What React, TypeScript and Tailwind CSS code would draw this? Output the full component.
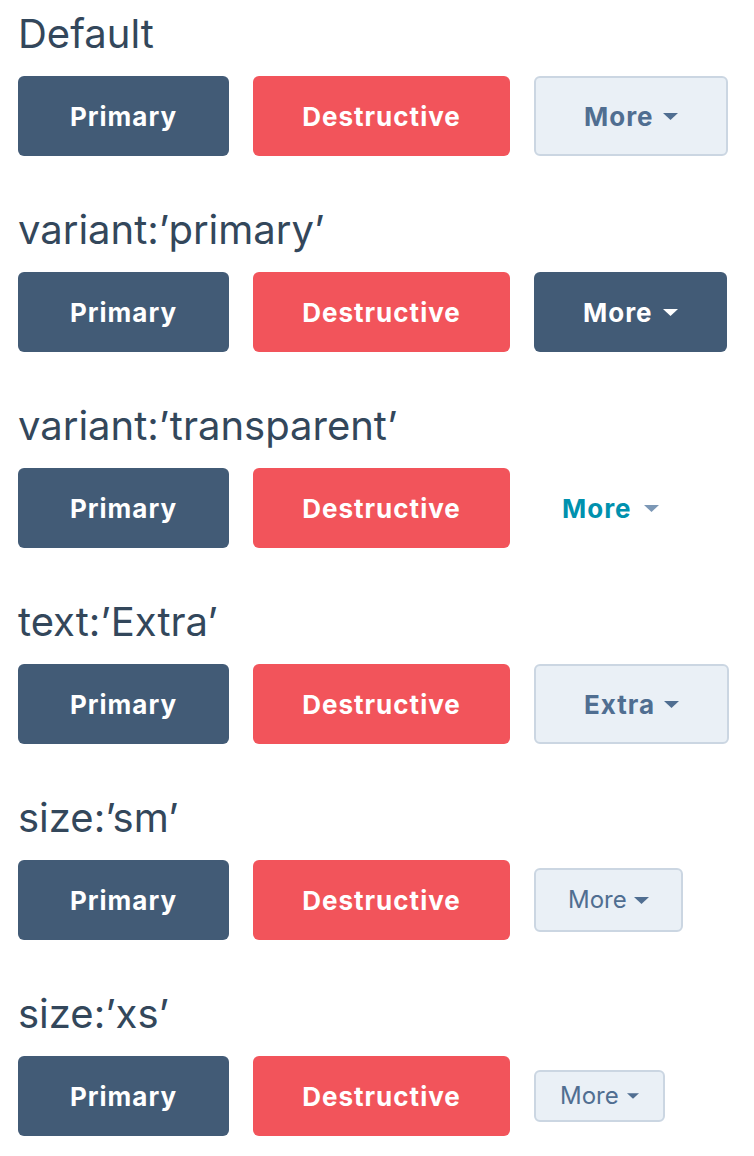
import React from "react";

type Variant = "secondary" | "primary" | "transparent";
type Size = "md" | "sm" | "xs";

const font = { fontFamily: "Inter, 'Noto Sans', sans-serif" };

function Caret({ className }: { className: string }) {
  return (
    <svg viewBox="0 0 15 7" className={className} fill="currentColor">
      <path d="M0 0 H15 L7.5 7 Z" />
    </svg>
  );
}

function MoreButton({ variant, size, label }: { variant: Variant; size: Size; label: string }) {
  if (variant === "transparent") {
    return (
      <button className="flex items-center gap-[12px] pl-[28px] h-[80px] text-[26px] font-bold tracking-[1px] text-[#0091ae]">
        {label}
        <Caret className="w-[15px] h-[7px] text-[#7c98b6]" />
      </button>
    );
  }
  if (variant === "primary") {
    return (
      <button className="flex items-center gap-[10px] px-[49px] h-[80px] rounded-[6px] bg-[#425b76] text-[26px] font-bold tracking-[1px] text-white">
        {label}
        <Caret className="w-[15px] h-[7px]" />
      </button>
    );
  }
  if (size === "sm") {
    return (
      <button className="flex items-center gap-[7px] px-[32px] h-[64px] rounded-[6px] border-2 border-[#cbd6e2] bg-[#eaf0f6] text-[24px] font-normal text-[#506e91]">
        {label}
        <Caret className="w-[15px] h-[7px]" />
      </button>
    );
  }
  if (size === "xs") {
    return (
      <button className="flex items-center gap-[8px] px-[24px] h-[52px] rounded-[6px] border-2 border-[#cbd6e2] bg-[#eaf0f6] text-[24px] font-normal text-[#506e91]">
        {label}
        <Caret className="w-[12px] h-[6px]" />
      </button>
    );
  }
  return (
    <button className="flex items-center gap-[9px] px-[48px] h-[80px] rounded-[6px] border-2 border-[#cbd6e2] bg-[#eaf0f6] text-[26px] font-bold tracking-[1px] text-[#506e91]">
      {label}
      <Caret className="w-[15px] h-[7px]" />
    </button>
  );
}

const sections: { title: string; variant: Variant; size: Size; label: string }[] = [
  { title: "Default", variant: "secondary", size: "md", label: "More" },
  { title: "variant:\u2019primary\u2019", variant: "primary", size: "md", label: "More" },
  { title: "variant:\u2019transparent\u2019", variant: "transparent", size: "md", label: "More" },
  { title: "text:\u2019Extra\u2019", variant: "secondary", size: "md", label: "Extra" },
  { title: "size:\u2019sm\u2019", variant: "secondary", size: "sm", label: "More" },
  { title: "size:\u2019xs\u2019", variant: "secondary", size: "xs", label: "More" },
];

export default function App() {
  return (
    <div className="min-h-screen bg-white pl-[18px] pt-[10px]" style={font}>
      {sections.map((s) => (
        <section key={s.title} className="flex flex-col pb-[50px]">
          <h2 className="h-[48px] leading-[48px] text-[40px] font-normal text-[#33475b]">{s.title}</h2>
          <div className="mt-[18px] flex h-[80px] items-center gap-[24px]">
            <button className="h-[80px] w-[211px] rounded-[6px] bg-[#425b76] text-[26px] font-bold tracking-[1px] text-white">
              Primary
            </button>
            <button className="h-[80px] w-[257px] rounded-[6px] bg-[#f2545b] text-[26px] font-bold tracking-[1px] text-white">
              Destructive
            </button>
            <MoreButton variant={s.variant} size={s.size} label={s.label} />
          </div>
        </section>
      ))}
    </div>
  );
}
